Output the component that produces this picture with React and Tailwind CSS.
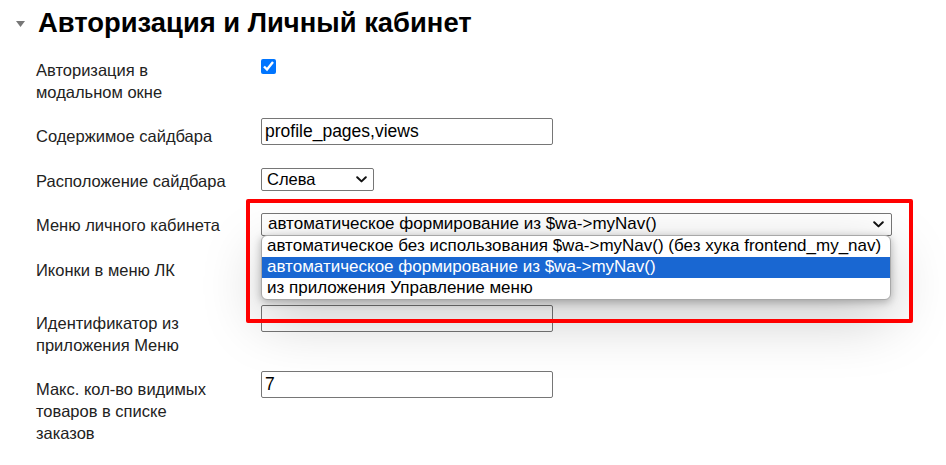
import React from 'react';

const Chevron = () => (
  <svg width="11" height="7" viewBox="0 0 11 7" className="shrink-0">
    <path d="M1.2 1.2 L5.5 5.4 L9.8 1.2" fill="none" stroke="#111" strokeWidth="2" strokeLinecap="round" strokeLinejoin="round" />
  </svg>
);

const Row = ({ label, children }) => (
  <div className="flex mb-[15.5px]">
    <div className="w-[225px] shrink-0 pt-[7px] text-[16.5px] leading-[22px] text-[#222]">{label}</div>
    <div>{children}</div>
  </div>
);

const TextInput = ({ value }) => (
  <div className="w-[292px] h-[27px] border border-[#767676] rounded-[2px] flex items-center pl-[3px] text-[17.5px] text-black">
    {value}
  </div>
);

const options = [
  'автоматическое без использования $wa->myNav() (без хука frontend_my_nav)',
  'автоматическое формирование из $wa->myNav()',
  'из приложения Управление меню',
];

function App() {
  return (
    <div className="relative min-h-[465px] bg-white font-['Liberation_Sans',Arial,sans-serif] overflow-hidden">
      <div className="pl-[16px] pt-[7px] flex items-center gap-[13px]">
        <svg width="9" height="6" viewBox="0 0 9 6" className="mt-[2px]">
          <polygon points="0,0 9,0 4.5,6" fill="#777" />
        </svg>
        <h1 className="text-[27.4px] leading-[32px] font-bold text-black">Авторизация и Личный кабинет</h1>
      </div>

      <div className="pl-[36px] mt-[12.5px]">
        <Row label={<>Авторизация в<br />модальном окне</>}>
          <input type="checkbox" checked readOnly className="mt-[7px] w-[15px] h-[15px] accent-[#0075ff] m-0" />
        </Row>

        <Row label="Содержимое сайдбара">
          <TextInput value="profile_pages,views" />
        </Row>

        <Row label="Расположение сайдбара">
          <div className="mt-[5px] w-[113px] h-[23px] border border-[#767676] rounded-[2px] flex items-center justify-between pl-[5px] pr-[6px] text-[16.5px] text-black">
            <span>Слева</span>
            <Chevron />
          </div>
        </Row>

        <Row label="Меню личного кабинета">
          <div className="relative mt-[5.5px]">
            <div className="w-[631px] h-[23px] border border-[#767676] rounded-[2px] flex items-center justify-between pl-[6px] pr-[7px] text-[17px] text-black">
              <span>{options[1]}</span>
              <Chevron />
            </div>
            <div className="absolute z-10 left-0 top-[22px] w-[630px] bg-white border border-[#a8a8a8] rounded-[6px] overflow-hidden shadow-[0_2px_8px_rgba(0,0,0,0.28),0_18px_60px_rgba(0,0,0,0.22)]">
              {options.map((o, i) => (
                <div
                  key={o}
                  className={
                    'h-[21px] flex items-center pl-[5px] text-[17px] whitespace-nowrap ' +
                    (i === 1 ? 'bg-[#1967d2] text-white' : 'text-black')
                  }
                >
                  {o}
                </div>
              ))}
            </div>
          </div>
        </Row>

        <Row label="Иконки в меню ЛК">
          <div className="h-[37.5px]" />
        </Row>

        <Row label={<>Идентификатор из<br />приложения Меню</>}>
          <TextInput value="" />
        </Row>

        <Row label={<>Макс. кол-во видимых<br />товаров в списке<br />заказов</>}>
          <TextInput value="7" />
        </Row>
      </div>

      {/* annotation frame */}
      <div className="absolute z-20 pointer-events-none left-[246px] top-[199px] w-[667px] h-[124px] border-4 border-[#ff0000] rounded-[2px]" />
    </div>
  );
}

export default App;
